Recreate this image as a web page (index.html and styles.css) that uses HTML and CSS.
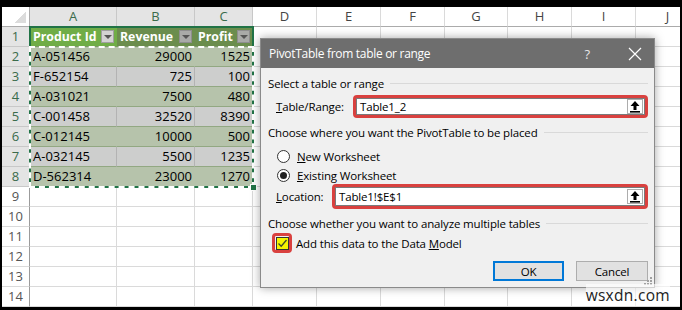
FILE: index.html
```html
<!DOCTYPE html>
<html lang="en">
<head>
  <meta charset="UTF-8" />
  <title>PivotTable from table or range</title>
  <link rel="stylesheet" href="styles.css">
</head>
<body>
<div class="sheet">
  <div class="grid">
    <div class="corner"></div>
    <div class="colhead sel">A</div><div class="colhead sel">B</div><div class="colhead sel">C</div>
    <div class="colhead">D</div><div class="colhead">E</div><div class="colhead">F</div><div class="colhead">G</div>
    <div class="colhead">H</div><div class="colhead">I</div><div class="colhead">J</div>

    <div class="rowhead sel">1</div>
    <div class="cell th first">Product Id<span class="drop"></span></div>
    <div class="cell th">Revenue<span class="drop"></span></div>
    <div class="cell th">Profit<span class="drop"></span></div>
    <div class="cell"></div><div class="cell"></div><div class="cell"></div><div class="cell"></div><div class="cell"></div><div class="cell"></div><div class="cell"></div>

    <div class="rowhead sel">2</div>
    <div class="cell band">A-051456</div><div class="cell band num">29000</div><div class="cell band num">1525</div>
    <div class="cell"></div><div class="cell"></div><div class="cell"></div><div class="cell"></div><div class="cell"></div><div class="cell"></div><div class="cell"></div>

    <div class="rowhead sel">3</div>
    <div class="cell plain">F-652154</div><div class="cell plain num">725</div><div class="cell plain num">100</div>
    <div class="cell"></div><div class="cell"></div><div class="cell"></div><div class="cell"></div><div class="cell"></div><div class="cell"></div><div class="cell"></div>

    <div class="rowhead sel">4</div>
    <div class="cell band">A-031021</div><div class="cell band num">7500</div><div class="cell band num">480</div>
    <div class="cell"></div><div class="cell"></div><div class="cell"></div><div class="cell"></div><div class="cell"></div><div class="cell"></div><div class="cell"></div>

    <div class="rowhead sel">5</div>
    <div class="cell plain">C-001458</div><div class="cell plain num">32520</div><div class="cell plain num">8390</div>
    <div class="cell"></div><div class="cell"></div><div class="cell"></div><div class="cell"></div><div class="cell"></div><div class="cell"></div><div class="cell"></div>

    <div class="rowhead sel">6</div>
    <div class="cell band">C-012145</div><div class="cell band num">10000</div><div class="cell band num">500</div>
    <div class="cell"></div><div class="cell"></div><div class="cell"></div><div class="cell"></div><div class="cell"></div><div class="cell"></div><div class="cell"></div>

    <div class="rowhead sel">7</div>
    <div class="cell plain">A-032145</div><div class="cell plain num">5500</div><div class="cell plain num">1235</div>
    <div class="cell"></div><div class="cell"></div><div class="cell"></div><div class="cell"></div><div class="cell"></div><div class="cell"></div><div class="cell"></div>

    <div class="rowhead sel">8</div>
    <div class="cell band">D-562314</div><div class="cell band num">23000</div><div class="cell band num">1270</div>
    <div class="cell"></div><div class="cell"></div><div class="cell"></div><div class="cell"></div><div class="cell"></div><div class="cell"></div><div class="cell"></div>

    <div class="rowhead">9</div>
    <div class="cell"></div><div class="cell"></div><div class="cell"></div><div class="cell"></div><div class="cell"></div><div class="cell"></div><div class="cell"></div><div class="cell"></div><div class="cell"></div><div class="cell"></div>
    <div class="rowhead">10</div>
    <div class="cell"></div><div class="cell"></div><div class="cell"></div><div class="cell"></div><div class="cell"></div><div class="cell"></div><div class="cell"></div><div class="cell"></div><div class="cell"></div><div class="cell"></div>
    <div class="rowhead">11</div>
    <div class="cell"></div><div class="cell"></div><div class="cell"></div><div class="cell"></div><div class="cell"></div><div class="cell"></div><div class="cell"></div><div class="cell"></div><div class="cell"></div><div class="cell"></div>
    <div class="rowhead">12</div>
    <div class="cell"></div><div class="cell"></div><div class="cell"></div><div class="cell"></div><div class="cell"></div><div class="cell"></div><div class="cell"></div><div class="cell"></div><div class="cell"></div><div class="cell"></div>
    <div class="rowhead">13</div>
    <div class="cell"></div><div class="cell"></div><div class="cell"></div><div class="cell"></div><div class="cell"></div><div class="cell"></div><div class="cell"></div><div class="cell"></div><div class="cell"></div><div class="cell"></div>
    <div class="rowhead">14</div>
    <div class="cell"></div><div class="cell"></div><div class="cell"></div><div class="cell"></div><div class="cell"></div><div class="cell"></div><div class="cell"></div><div class="cell"></div><div class="cell"></div><div class="cell"></div>
  </div>

  <!-- selection + copy marquee -->
  <div class="selection"></div>
  <div class="marquee"></div>
  <div class="handle"></div>

  <div class="dialog">
    <div class="titlebar">
      <span class="title">PivotTable from table or range</span>
      <span class="help">?</span>
      <svg class="close" width="14" height="14" viewBox="0 0 14 14"><path d="M1 1L13 13M13 1L1 13" stroke="#fff" stroke-width="1.2"/></svg>
    </div>
    <div class="body">
      <div class="group"><span>Select a table or range</span></div>
      <div class="field-row">
        <span class="label"><u>T</u>able/Range:</span>
        <div class="mark wide">
          <div class="input"><span>Table1_2</span><span class="pick"><svg width="12" height="13" viewBox="0 0 12 13"><path d="M6 1L1.5 6H4.5V10H7.5V6H10.5Z" fill="#000"/><rect x="1" y="11" width="10" height="1.6" fill="#000"/></svg></span></div>
        </div>
      </div>
      <div class="group second"><span>Choose where you want the PivotTable to be placed</span></div>
      <div class="radio-row first"><span class="radio"></span><span><u>N</u>ew Worksheet</span></div>
      <div class="radio-row"><span class="radio on"></span><span><u>E</u>xisting Worksheet</span></div>
      <div class="field-row loc">
        <span class="label short"><u>L</u>ocation:</span>
        <div class="mark">
          <div class="input"><span>Table1!$E$1</span><span class="pick"><svg width="12" height="13" viewBox="0 0 12 13"><path d="M6 1L1.5 6H4.5V10H7.5V6H10.5Z" fill="#000"/><rect x="1" y="11" width="10" height="1.6" fill="#000"/></svg></span></div>
        </div>
      </div>
      <div class="group third"><span>Choose whether you want to analyze multiple tables</span></div>
      <div class="check-row">
        <span class="check-mark"><span class="check"><svg width="11" height="11" viewBox="0 0 11 11"><path d="M1.5 5.5L4.2 8.2L9.5 2" fill="none" stroke="#3d4a2a" stroke-width="1.3"/></svg></span></span>
        <span>Add this data to the Data <u>M</u>odel</span>
      </div>
      <div class="buttons">
        <div class="btn default">OK</div>
        <div class="btn">Cancel</div>
      </div>
    </div>
    <svg class="grip" width="8" height="8" viewBox="0 0 8 8"><g fill="#a0a0a0"><rect x="6" y="0" width="2" height="2"/><rect x="3" y="3" width="2" height="2"/><rect x="6" y="3" width="2" height="2"/><rect x="0" y="6" width="2" height="2"/><rect x="3" y="6" width="2" height="2"/><rect x="6" y="6" width="2" height="2"/></g></svg>
  </div>

  <div class="watermark">wsxdn.com</div>
</div>
</body>
</html>
```

FILE: styles.css
```css
body {
  margin: 0;
  background: #000;
  font-family: "Open Sans", sans-serif;
}
.sheet {
  position: relative;
  margin: 7px 2px 3px 2px;
  height: 300px;
  background: #fff;
  overflow: hidden;
}
.grid {
  display: grid;
  grid-template-columns: 28px 87px 78px 58px 64px 64px 64px 63px 64px 64px 64px;
  grid-auto-rows: 20px;
  font-size: 13px;
}
.grid > div {
  box-sizing: border-box;
  border-right: 1px solid #dadada;
  border-bottom: 1px solid #dadada;
  white-space: nowrap;
  overflow: hidden;
}
.corner {
  background: linear-gradient(135deg, #fff 58%, #dcdcdc 58%) no-repeat;
  background-size: 14px 14px;
  background-position: right 3px bottom 3px;
  border-bottom-color: #ababab !important;
  border-right-color: #ababab !important;
}
.colhead {
  text-align: center;
  line-height: 19px;
  color: #444;
  font-size: 13px;
  border-bottom-color: #ababab !important;
}
.colhead.sel {
  background: #e4e4e4;
  color: #3a6b4b;
  border-right-color: #c8c8c8 !important;
}
.rowhead {
  text-align: center;
  line-height: 19px;
  color: #555;
  border-right-color: #9b9b9b !important;
}
.rowhead.sel {
  background: #e4e4e4;
  color: #3a6b4b;
  border-bottom-color: #c8c8c8 !important;
}
.cell {
  line-height: 19px;
  padding: 0 2px 0 3px;
  color: #000;
}
.cell.num {
  text-align: right;
}
.cell.th {
  position: relative;
  background: #6b8d4d;
  color: #fff;
  font-weight: bold;
  font-size: 12.3px;
  border-right-color: #6b8d4d !important;
  border-bottom-color: #7f9a6a !important;
}
.cell.th.first {
  background: #70ad47;
  border-right-color: #70ad47 !important;
}
.drop {
  position: absolute;
  right: 2px;
  top: 3px;
  width: 13px;
  height: 13px;
  box-sizing: border-box;
  background: #a9aaa8;
  border: 1px solid #8e8e8e;
}
.first .drop {
  background: #d3d3d3;
  border-color: #a0a0a0;
}
.drop::after {
  content: "";
  position: absolute;
  left: 2px;
  top: 4px;
  border-left: 4px solid transparent;
  border-right: 4px solid transparent;
  border-top: 4px solid #555;
}
.cell.band {
  background: #b6c3ab;
  border-right-color: #b6c3ab !important;
  border-bottom-color: #92a882 !important;
}
.cell.plain {
  background: #cdcecd;
  border-right-color: #b3b3b3 !important;
  border-bottom-color: #92a882 !important;
}
.selection {
  position: absolute;
  left: 27px;
  top: 19px;
  width: 225px;
  height: 162px;
  box-sizing: border-box;
  border: 2px solid #217346;
}
.marquee {
  position: absolute;
  left: 27px;
  top: 39px;
  width: 225px;
  height: 142px;
  box-sizing: border-box;
  border: 2px dashed #fff;
}
.handle {
  position: absolute;
  left: 248px;
  top: 177px;
  width: 5px;
  height: 5px;
  background: #217346;
  border: 1px solid #fff;
}

/* dialog */
.dialog {
  position: absolute;
  left: 258px;
  top: 31px;
  width: 395px;
  height: 250px;
  box-sizing: border-box;
  background: #f0f0f0;
  border: 1px solid #8a8a8a;
  box-shadow: 0 0 9px rgba(0, 0, 0, 0.35);
  font-size: 11.5px;
  letter-spacing: -0.15px;
  color: #000;
}
.titlebar {
  height: 29px;
  background: #6e6e6e;
  color: #fff;
  display: flex;
  align-items: center;
  padding: 0 12px 0 8px;
}
.title {
  flex: 1;
  font-size: 12px;
  letter-spacing: -0.3px;
}
.help {
  font-size: 13px;
  margin-right: 38px;
  color: #e8e8e8;
}
.body {
  padding: 0 6px 0 7px;
  display: flex;
  flex-direction: column;
}
.group {
  display: flex;
  align-items: center;
  gap: 6px;
  height: 18px;
  margin-top: 6px;
}
.group::after {
  content: "";
  flex: 1;
  border-top: 1px solid #d9d9d9;
}
.group.second {
  margin-top: 5px;
}
.group.third {
  margin-top: 5px;
}
.field-row {
  display: flex;
  align-items: center;
  margin-top: 3px;
  height: 23px;
}
.field-row.loc {
  margin-top: 0;
  height: 25px;
}
.label {
  width: 85px;
  padding-left: 8px;
  box-sizing: border-box;
}
.label.short {
  width: 64px;
}
.mark {
  flex: 1;
  height: 100%;
  box-sizing: border-box;
  border: 3px solid #d9413f;
  border-radius: 4px;
}
.input {
  display: flex;
  align-items: center;
  height: 100%;
  box-sizing: border-box;
  background: #fff;
  border: 1px solid #7a7a7a;
  padding-left: 3px;
}
.input span:first-child {
  flex: 1;
}
.pick {
  width: 16px;
  height: 15px;
  margin-right: 1px;
  box-sizing: border-box;
  border: 1px solid #adadad;
  background: #fff;
  display: flex;
  align-items: center;
  justify-content: center;
}
.radio-row {
  display: flex;
  align-items: center;
  gap: 7px;
  height: 18px;
  padding-left: 9px;
  margin-top: 1px;
}
.radio-row.first {
  margin-top: 6px;
}
.radio {
  width: 13px;
  height: 13px;
  box-sizing: border-box;
  border: 1px solid #333;
  border-radius: 50%;
  background: #fff;
  display: flex;
  align-items: center;
  justify-content: center;
}
.radio.on::after {
  content: "";
  width: 7px;
  height: 7px;
  border-radius: 50%;
  background: #222;
}
.check-row {
  display: flex;
  align-items: center;
  gap: 4px;
  height: 20px;
  margin-top: 1px;
  padding-left: 4px;
}
.check-mark {
  width: 20px;
  height: 20px;
  box-sizing: border-box;
  border: 3px solid #d9413f;
  border-radius: 4px;
  display: flex;
  align-items: center;
  justify-content: center;
}
.check {
  width: 13px;
  height: 13px;
  box-sizing: border-box;
  background: #f5f500;
  border: 1px solid #333;
  display: flex;
  align-items: center;
  justify-content: center;
}
.buttons {
  display: flex;
  justify-content: flex-end;
  gap: 12px;
  margin-top: 8px;
}
.btn {
  width: 72px;
  height: 20px;
  box-sizing: border-box;
  background: #e1e1e1;
  border: 1px solid #adadad;
  display: flex;
  align-items: center;
  justify-content: center;
}
.btn.default {
  width: 71px;
  border: 2px solid #0078d7;
}
.grip {
  position: absolute;
  right: 2px;
  bottom: 2px;
}
.watermark {
  position: absolute;
  right: 10px;
  bottom: 1px;
  font-size: 15.5px;
  letter-spacing: 0.3px;
  color: #222;
  background: rgba(255, 255, 255, 0.6);
}
```
